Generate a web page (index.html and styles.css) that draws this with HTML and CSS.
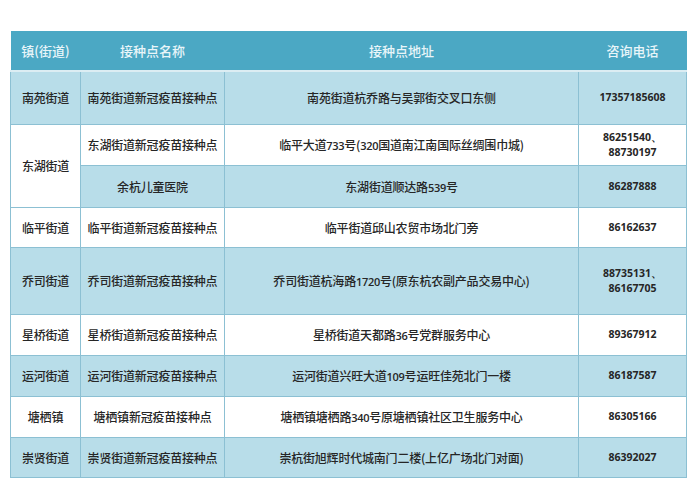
FILE: index.html
```html
<!DOCTYPE html>
<html lang="zh">
<head>
<meta charset="utf-8">
<link rel="stylesheet" href="styles.css">
</head>
<body>
<table class="sites">
  <colgroup>
    <col class="c1"><col class="c2"><col class="c3"><col class="c4">
  </colgroup>
  <thead>
    <tr class="h-head">
      <th>镇(街道)</th><th>接种点名称</th><th>接种点地址</th><th>咨询电话</th>
    </tr>
  </thead>
  <tbody>
    <tr class="light h53">
      <td>南苑街道</td><td>南苑街道新冠疫苗接种点</td><td>南苑街道杭乔路与吴郭街交叉口东侧</td><td class="tel">17357185608</td>
    </tr>
    <tr class="white h41">
      <td rowspan="2" class="white">东湖街道</td><td>东湖街道新冠疫苗接种点</td><td>临平大道<span class="num">733</span>号(<span class="num">320</span>国道南江南国际丝绸围巾城)</td><td class="tel">86251540、<br>88730197</td>
    </tr>
    <tr class="light h42">
      <td>余杭儿童医院</td><td>东湖街道顺达路<span class="num">539</span>号</td><td class="tel">86287888</td>
    </tr>
    <tr class="white h40">
      <td>临平街道</td><td>临平街道新冠疫苗接种点</td><td>临平街道邱山农贸市场北门旁</td><td class="tel">86162637</td>
    </tr>
    <tr class="light h67">
      <td>乔司街道</td><td>乔司街道新冠疫苗接种点</td><td>乔司街道杭海路<span class="num">1720</span>号(原东杭农副产品交易中心)</td><td class="tel">88735131、<br>86167705</td>
    </tr>
    <tr class="white h41">
      <td>星桥街道</td><td>星桥街道新冠疫苗接种点</td><td>星桥街道天都路<span class="num">36</span>号党群服务中心</td><td class="tel">89367912</td>
    </tr>
    <tr class="light h41">
      <td>运河街道</td><td>运河街道新冠疫苗接种点</td><td>运河街道兴旺大道<span class="num">109</span>号运旺佳苑北门一楼</td><td class="tel">86187587</td>
    </tr>
    <tr class="white h41">
      <td>塘栖镇</td><td>塘栖镇新冠疫苗接种点</td><td>塘栖镇塘栖路<span class="num">340</span>号原塘栖镇社区卫生服务中心</td><td class="tel">86305166</td>
    </tr>
    <tr class="light h40">
      <td>崇贤街道</td><td>崇贤街道新冠疫苗接种点</td><td>崇杭街旭辉时代城南门二楼(上亿广场北门对面)</td><td class="tel">86392027</td>
    </tr>
  </tbody>
</table>
</body>
</html>
```

FILE: styles.css
```css
html, body {
  margin: 0;
  background: #ffffff;
}
body {
  padding: 31px 0 0 10px;
  font-family: "Noto Sans CJK SC", "Noto Sans", sans-serif;
}
.sites {
  border-collapse: collapse;
  table-layout: fixed;
  width: 676px;
}
.c1 { width: 70px; }
.c2 { width: 144px; }
.c3 { width: 354px; }
.c4 { width: 108px; }

.sites th {
  background: #4ba8c4;
  color: #e8f5f9;
  font-weight: 500;
  font-size: 13px;
  height: 39px;
  padding: 0;
  text-align: center;
  border-bottom: 2px solid #dcedf3;
}
.sites td {
  font-size: 12px;
  font-weight: 500;
  color: #262626;
  text-align: center;
  padding: 0;
  border: 1px solid #8cc0d3;
  letter-spacing: -0.2px;
}
.light td, td.light { background: #b8dde9; }
.white td, td.white { background: #ffffff; }
.h53 { height: 53px; }
.h41 { height: 41px; }
.h42 { height: 42px; }
.h40 { height: 40px; }
.h67 { height: 67px; }

.tel {
  font-family: "Open Sans", "Liberation Sans", sans-serif;
  font-weight: 700 !important;
  font-size: 10.5px !important;
  line-height: 15px;
  letter-spacing: 0 !important;
  color: #2a2a2a;
}
.num {
  font-family: "Open Sans", "Liberation Sans", sans-serif;
  font-weight: 600;
  font-size: 11px;
  letter-spacing: -0.3px;
}
```
